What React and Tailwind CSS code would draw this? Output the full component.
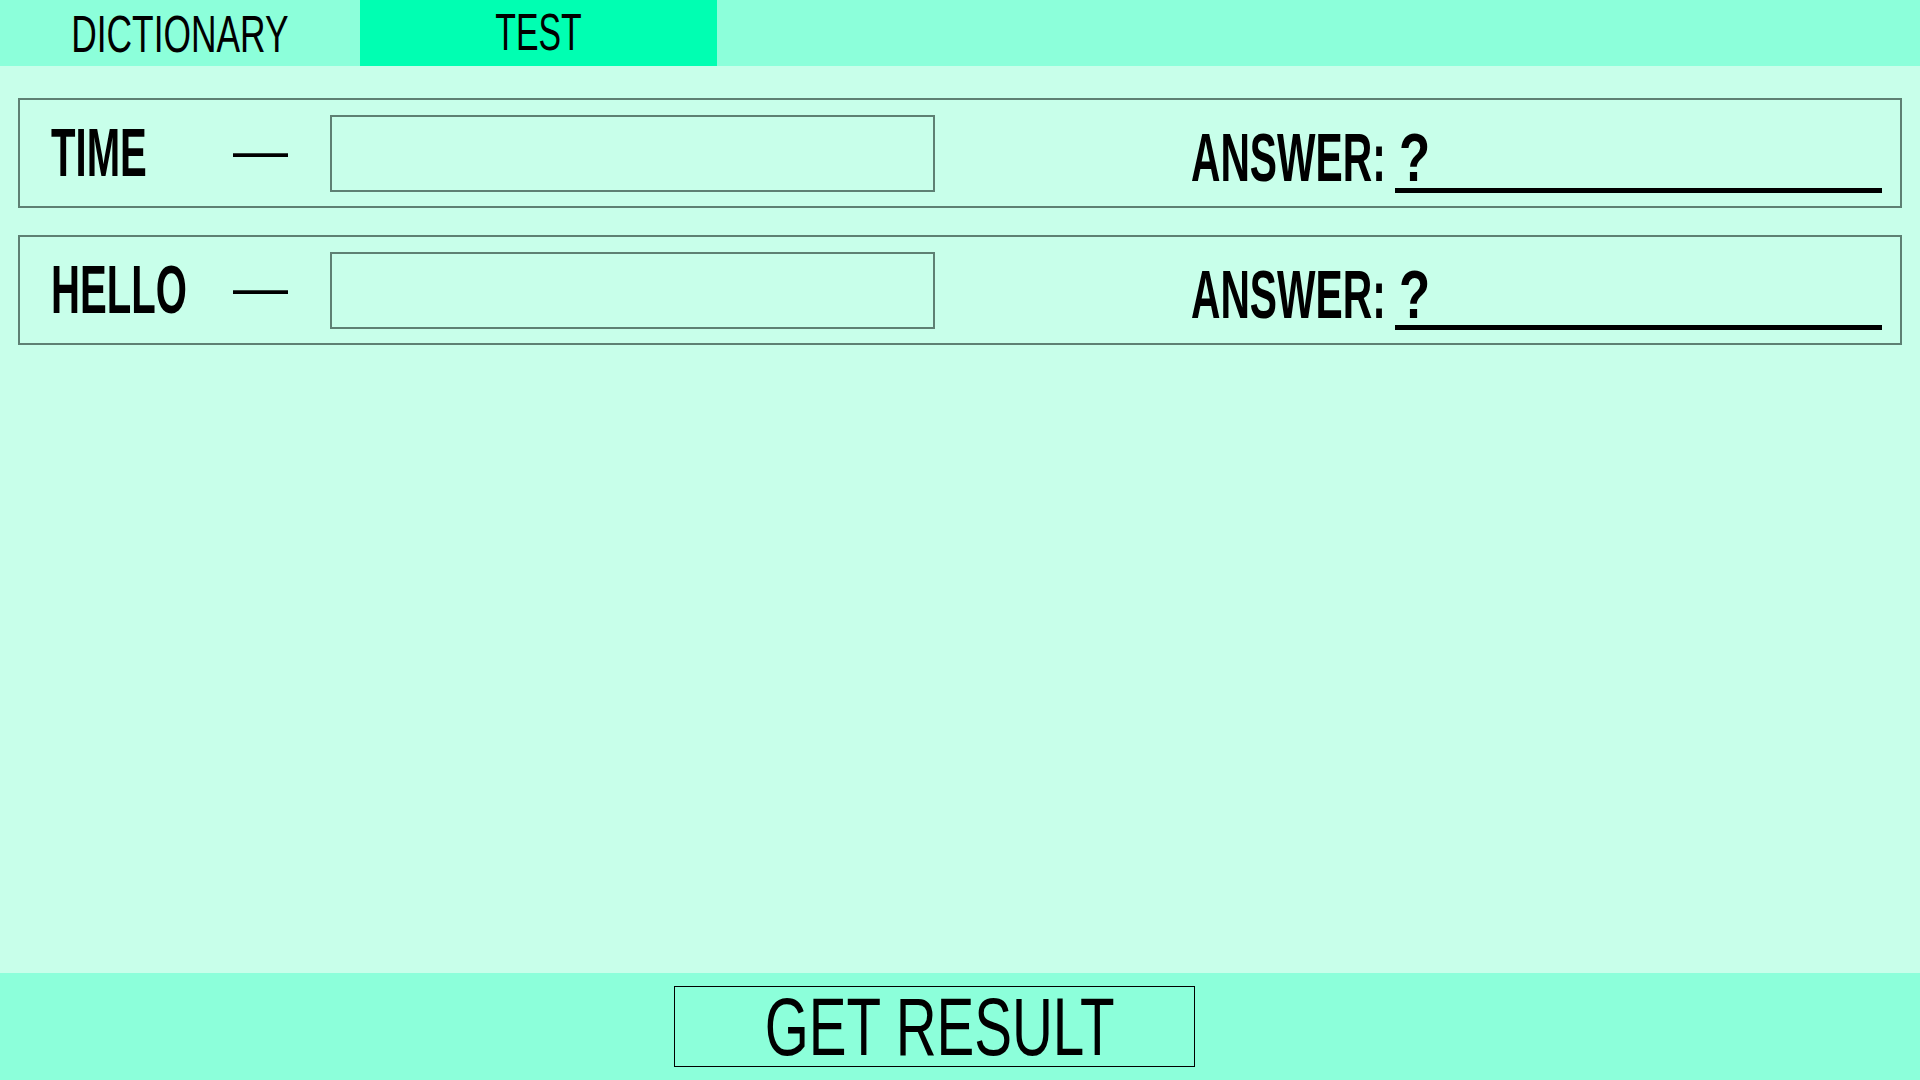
import React from "react";

const FONT = "font-['Liberation_Sans',sans-serif]";

function Row({ word }) {
  return (
    <div className="flex h-[110px] items-center border-2 border-[#5e8073] pl-[31px] pr-[18px]">
      <div className="mb-[3px] flex w-[182px] shrink-0">
        <span className="origin-left scale-x-[0.59] whitespace-nowrap text-[68px] font-bold leading-none text-black">
          {word}
        </span>
      </div>
      <span className="mb-[6px] w-[55px] shrink-0 text-[55px] leading-none text-black">—</span>
      <input
        type="text"
        className="ml-[42px] h-[77px] w-[605px] shrink-0 border-2 border-[#5e8073] bg-transparent outline-none"
      />
      <div className="ml-auto mt-[9px] flex items-start">
        <span className="origin-right scale-x-[0.6] whitespace-nowrap text-[68px] font-bold leading-none text-black">
          ANSWER:
        </span>
        <div className="ml-[9px] h-[70px] w-[487px] border-b-[5px] border-black pl-[4px]">
          <span className="block origin-left scale-x-[0.75] text-[68px] font-bold leading-none text-black">?</span>
        </div>
      </div>
    </div>
  );
}

export default function App() {
  return (
    <div className={`${FONT} flex h-screen w-full flex-col bg-[#c8ffea] text-black`}>
      <header className="flex h-[66px] shrink-0 bg-[#8cffda]">
        <button className="flex w-[360px] items-center justify-center">
          <span className="mt-[2px] origin-center scale-x-[0.68] whitespace-nowrap text-[52px] leading-none">
            DICTIONARY
          </span>
        </button>
        <button className="flex w-[357px] items-center justify-center bg-[#00ffb2]">
          <span className="mb-[3px] origin-center scale-x-[0.65] whitespace-nowrap text-[52px] leading-none">
            TEST
          </span>
        </button>
      </header>

      <main className="flex flex-1 flex-col gap-[27px] px-[18px] pt-[32px]">
        <Row word="TIME" />
        <Row word="HELLO" />
      </main>

      <footer className="flex h-[107px] shrink-0 justify-center bg-[#8cffda] pr-[51px] pt-[13px]">
        <button className="flex h-[81px] w-[521px] items-center justify-center border border-black">
          <span className="ml-[10px] origin-center scale-x-[0.69] whitespace-nowrap text-[82px] leading-none">
            GET RESULT
          </span>
        </button>
      </footer>
    </div>
  );
}
